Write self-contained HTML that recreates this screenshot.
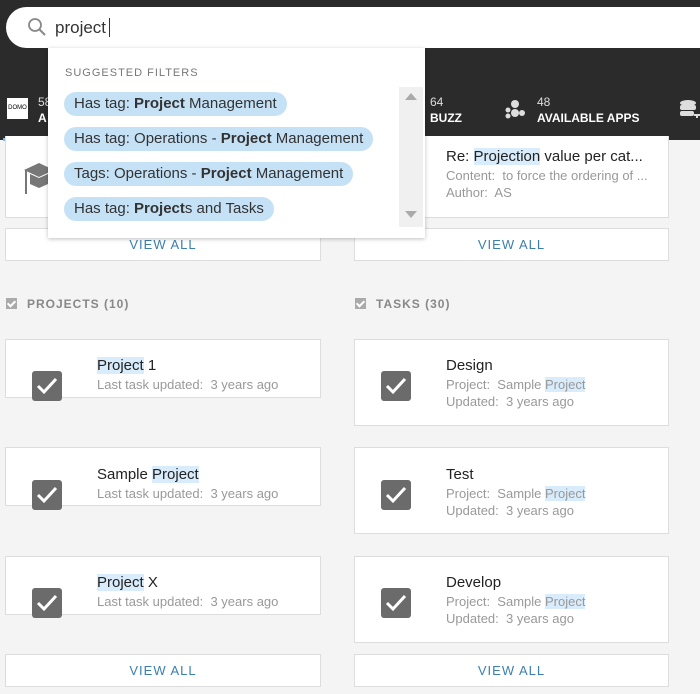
<html><head><style>
body{margin:0;width:700px;height:694px;background:#f4f4f4;font-family:"Liberation Sans",sans-serif;position:relative;overflow:hidden;color:#333}
.a{position:absolute}
.card{position:absolute;background:#fff;border:1px solid #ddd;box-sizing:border-box}
.btn{position:absolute;background:#fff;border:1px solid #ddd;box-sizing:border-box;height:33px;text-align:center;line-height:31px;color:#3b7fb0;font-size:13px;letter-spacing:1px}
.hl{background:#d8ecfb}
.t{font-size:15px;color:#222}
.s{font-size:13px;color:#999}
.chk{position:absolute;width:30px;height:30px;background:#6b6b6b;border-radius:3px}
.chk svg{position:absolute;left:4px;top:5px}
.pill{position:absolute;left:64px;height:24px;line-height:24px;background:#c5e1f6;border-radius:12px;padding:0 10px;font-size:15px;color:#333;white-space:nowrap}
.sec{position:absolute;top:297px;font-size:12px;color:#888;letter-spacing:1px;font-weight:bold}
.sec i{display:inline-block;position:relative;width:11px;height:11px;background:#aaa;margin-right:10px;vertical-align:-1px}
.sec i:after{content:"";position:absolute;left:3px;top:1px;width:3px;height:6px;border:solid #fff;border-width:0 2px 2px 0;transform:rotate(45deg)}
</style></head><body>
<div class="a" style="left:0;top:0;width:700px;height:140px;background:#2b2b2b"></div>
<div class="a" style="left:6px;top:7px;width:720px;height:41px;background:#fff;border-radius:21px"></div>
<svg class="a" style="left:27px;top:17px" width="20" height="20"><circle cx="8" cy="8" r="6" fill="none" stroke="#888" stroke-width="1.8"/><line x1="12.5" y1="12.5" x2="18" y2="18" stroke="#888" stroke-width="2"/></svg>
<div class="a" style="left:55px;top:18px;font-size:17px;color:#333">project<span style="border-left:1px solid #333;margin-left:3px"></span></div>
<div class="a" style="left:7px;top:98px;width:21px;height:21px;background:#fff;font-size:6px;color:#000;line-height:21px;text-align:center">DOMO</div>
<div class="a" style="left:38px;top:95px;font-size:12px;color:#ddd">58</div>
<div class="a" style="left:38px;top:111px;font-size:12px;color:#fff;font-weight:bold">A</div>
<div class="a" style="left:3px;top:138px;width:45px;height:3px;background:#7ab8e0"></div>
<div class="a" style="left:430px;top:95px;font-size:12px;color:#ddd">64</div>
<div class="a" style="left:430px;top:111px;font-size:12px;color:#fff;font-weight:bold">BUZZ</div>
<svg class="a" style="left:504px;top:99px" width="22" height="20" fill="#ddd"><circle cx="11" cy="5" r="4"/><circle cx="4" cy="11" r="2.5"/><circle cx="4" cy="17" r="2.5"/><circle cx="11" cy="14" r="4"/><circle cx="18" cy="14" r="3"/></svg>
<div class="a" style="left:537px;top:95px;font-size:12px;color:#ddd">48</div>
<div class="a" style="left:537px;top:111px;font-size:12px;color:#fff;font-weight:bold">AVAILABLE APPS</div>
<svg class="a" style="left:679px;top:99px" width="21" height="22" fill="#ddd"><ellipse cx="9" cy="4" rx="8" ry="3"/><rect x="1" y="6" width="16" height="5" rx="2"/><rect x="1" y="12" width="14" height="5" rx="2"/><path d="M15 15h6v2h-2v2h-2v-2h-2z"/></svg>

<div class="card" style="left:5px;top:136px;width:316px;height:82px;border-top:none"></div>
<svg class="a" style="left:24px;top:160px" width="30" height="34" fill="#777"><path d="M0 10 L15 3 L30 10 L15 17Z"/><path d="M6 14v10l9 4l9-4v-10l-9 4z"/><rect x="1" y="10" width="2" height="24"/></svg>
<div class="card" style="left:354px;top:136px;width:315px;height:82px;border-top:none"></div>
<div class="a t" style="left:446px;top:148px">Re: <span class="hl">Projection</span> value per cat...</div>
<div class="a s" style="left:446px;top:168px">Content:&nbsp; to force the ordering of ...</div>
<div class="a s" style="left:446px;top:185px">Author:&nbsp; AS</div>
<div class="btn" style="left:5px;top:228px;width:316px">VIEW ALL</div>
<div class="btn" style="left:354px;top:228px;width:315px">VIEW ALL</div>

<div class="sec" style="left:6px"><i></i>PROJECTS (10)</div>
<div class="sec" style="left:355px"><i></i>TASKS (30)</div>

<div class="card" style="left:5px;top:339px;width:316px;height:59px"></div>
<div class="card" style="left:5px;top:447px;width:316px;height:59px"></div>
<div class="card" style="left:5px;top:556px;width:316px;height:59px"></div>
<div class="card" style="left:354px;top:339px;width:315px;height:87px"></div>
<div class="card" style="left:354px;top:447px;width:315px;height:87px"></div>
<div class="card" style="left:354px;top:556px;width:315px;height:87px"></div>

<div class="chk" style="left:32px;top:371px"><svg width="22" height="20"><path d="M2 10l6 6L20 3" fill="none" stroke="#fff" stroke-width="3"/></svg></div>
<div class="chk" style="left:32px;top:480px"><svg width="22" height="20"><path d="M2 10l6 6L20 3" fill="none" stroke="#fff" stroke-width="3"/></svg></div>
<div class="chk" style="left:32px;top:588px"><svg width="22" height="20"><path d="M2 10l6 6L20 3" fill="none" stroke="#fff" stroke-width="3"/></svg></div>
<div class="chk" style="left:381px;top:371px"><svg width="22" height="20"><path d="M2 10l6 6L20 3" fill="none" stroke="#fff" stroke-width="3"/></svg></div>
<div class="chk" style="left:381px;top:480px"><svg width="22" height="20"><path d="M2 10l6 6L20 3" fill="none" stroke="#fff" stroke-width="3"/></svg></div>
<div class="chk" style="left:381px;top:588px"><svg width="22" height="20"><path d="M2 10l6 6L20 3" fill="none" stroke="#fff" stroke-width="3"/></svg></div>

<div class="a t" style="left:97px;top:357px"><span class="hl">Project</span> 1</div>
<div class="a s" style="left:97px;top:377px">Last task updated:&nbsp; 3 years ago</div>
<div class="a t" style="left:97px;top:466px">Sample <span class="hl">Project</span></div>
<div class="a s" style="left:97px;top:486px">Last task updated:&nbsp; 3 years ago</div>
<div class="a t" style="left:97px;top:574px"><span class="hl">Project</span> X</div>
<div class="a s" style="left:97px;top:594px">Last task updated:&nbsp; 3 years ago</div>

<div class="a t" style="left:446px;top:357px">Design</div>
<div class="a s" style="left:446px;top:377px">Project:&nbsp; Sample <span class="hl">Project</span></div>
<div class="a s" style="left:446px;top:394px">Updated:&nbsp; 3 years ago</div>
<div class="a t" style="left:446px;top:466px">Test</div>
<div class="a s" style="left:446px;top:486px">Project:&nbsp; Sample <span class="hl">Project</span></div>
<div class="a s" style="left:446px;top:503px">Updated:&nbsp; 3 years ago</div>
<div class="a t" style="left:446px;top:574px">Develop</div>
<div class="a s" style="left:446px;top:594px">Project:&nbsp; Sample <span class="hl">Project</span></div>
<div class="a s" style="left:446px;top:611px">Updated:&nbsp; 3 years ago</div>

<div class="btn" style="left:5px;top:654px;width:316px">VIEW ALL</div>
<div class="btn" style="left:354px;top:654px;width:315px">VIEW ALL</div>

<div class="a" style="left:48px;top:48px;width:377px;height:190px;background:#fff;box-shadow:0 1px 4px rgba(0,0,0,.25)"></div>
<div class="a" style="left:65px;top:67px;font-size:11px;color:#777;letter-spacing:1px">SUGGESTED FILTERS</div>
<div class="a" style="left:399px;top:87px;width:24px;height:140px;background:#f0f0f0"></div>
<div class="a" style="left:405px;top:93px;width:0;height:0;border:6px solid transparent;border-bottom:7px solid #aaa;border-top:0"></div>
<div class="a" style="left:405px;top:211px;width:0;height:0;border:6px solid transparent;border-top:7px solid #aaa;border-bottom:0"></div>
<div class="pill" style="top:92px">Has tag: <b>Project</b> Management</div>
<div class="pill" style="top:127px">Has tag: Operations - <b>Project</b> Management</div>
<div class="pill" style="top:162px">Tags: Operations - <b>Project</b> Management</div>
<div class="pill" style="top:197px">Has tag: <b>Project</b>s and Tasks</div>
</body></html>
